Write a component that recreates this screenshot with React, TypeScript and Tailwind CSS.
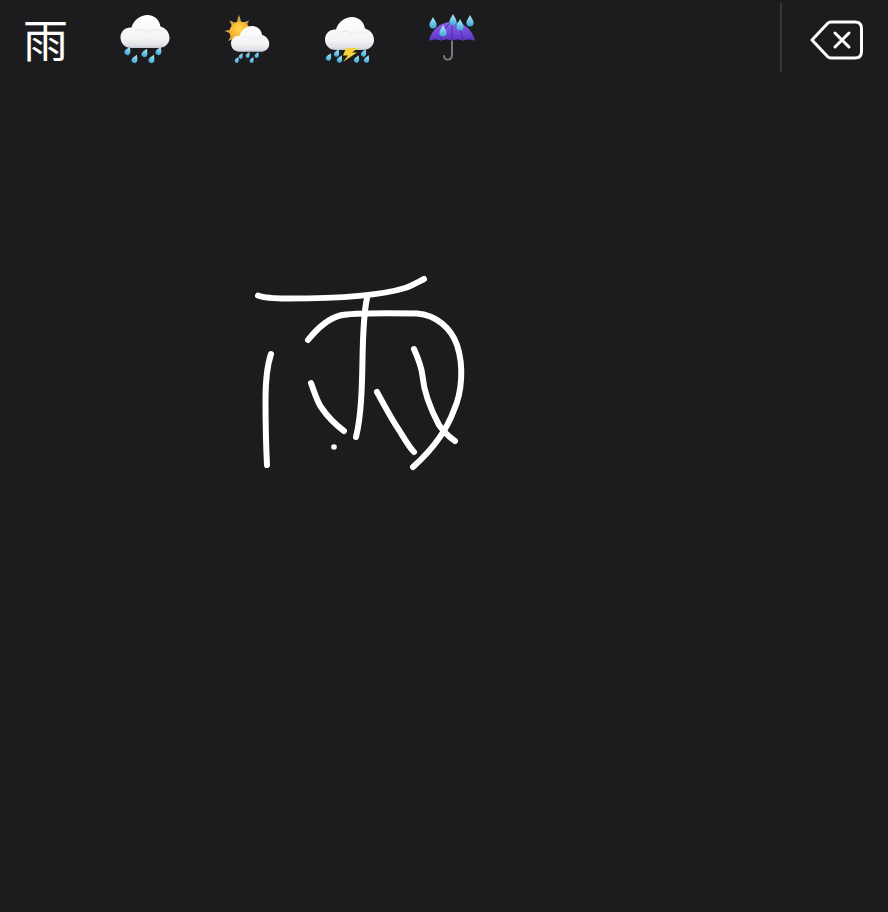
import React from 'react';

const strokes = [
  'M258 295.5 C263 297.500 272 298.500 288 298.500 C325 298.500 378 296.500 405 288 C412 285.500 418 282 424 279',
  'M367 298 C364 312 363 330 362.500 360 C362 385 361.500 415 356 437',
  'M308 340 C316 330 327 319 340 315.500 C350 313 385 313 417 313.500 C436 315 451 328 457 345 C464 366 462 392 454 410 C446 432 432 450 413 467',
  'M271 354 C267 366 265.500 380 265.500 400 C265.500 425 266 445 267 465',
  'M311 383 C314 391 317 401 321 407 C327 416 336 425 344 431',
  'M377 392 C384 405 392 420 399 430 C404 438 409 447 414 452',
  'M414 349 C418 358 421.500 366 422.500 376 C424 392 431 410 439 425 C444 432 449 437 455 441',
];

const Defs = () => (
  <defs>
    <linearGradient id="cloudFill" x1="0" y1="0" x2="0" y2="1">
      <stop offset="0" stopColor="#ffffff" />
      <stop offset="0.7" stopColor="#f4f4f6" />
      <stop offset="0.92" stopColor="#dfe0e6" />
      <stop offset="1" stopColor="#c4c6d0" />
    </linearGradient>
    <linearGradient id="dropFill" x1="0" y1="0" x2="0" y2="1">
      <stop offset="0" stopColor="#b4eefa" />
      <stop offset="1" stopColor="#3aa6d8" />
    </linearGradient>
    <radialGradient id="sunFill" cx="0.45" cy="0.35" r="0.7">
      <stop offset="0" stopColor="#ffd84a" />
      <stop offset="1" stopColor="#ee9a1c" />
    </radialGradient>
    <linearGradient id="domeFill" x1="0" y1="0" x2="0" y2="1">
      <stop offset="0" stopColor="#8f62ee" />
      <stop offset="1" stopColor="#5a34c4" />
    </linearGradient>
  </defs>
);

const Cloud = ({ x, y, s = 1 }: { x: number; y: number; s?: number }) => (
  <g transform={`translate(${x} ${y}) scale(${s})`}>
    <path
      fill="url(#cloudFill)"
      d="M11 33 C4 33 0 28 0 22.500 C0 16 5 12 11 12.500 C13 5 20 0 27 0 C34 0 39 5 40 11.500 C45 13 49 17 49 23 C49 29 44 33 38 33 Z"
    />
    <path d="M14 16 C19 13 24 14 27 18 C31 14 37 14 41 17" fill="none" stroke="#e2e3e8" strokeWidth="0.8" />
  </g>
);

const Drop = ({ x, y, r = 20, s = 1 }: { x: number; y: number; r?: number; s?: number }) => (
  <path
    transform={`translate(${x} ${y}) rotate(${r}) scale(${s})`}
    fill="url(#dropFill)"
    d="M0 -5 C1 -2.500 3 -1 3 1.500 A3 3 0 0 1 -3 1.500 C-3 -1 -1 -2.500 0 -5 Z"
  />
);

const RainCloud = () => (
  <svg width="60" height="60" viewBox="115 10 60 60">
    <Defs />
    <Cloud x={120.5} y={15} />
    {[[128, 51], [145, 53], [159, 51], [135, 59], [152, 59]].map(([x, y]) => (
      <Drop key={x} x={x} y={y} s={0.95} r={25} />
    ))}
  </svg>
);

const SunRain = () => (
  <svg width="60" height="60" viewBox="217 10 60 60">
    <Defs />
    <path
      fill="#c9a24a"
      d="M239 14.500 L241.500 23 L236.500 23 Z M229.500 20.500 L236 23 L232 26.500 Z M249 20.500 L246 26.500 L242 23 Z M224.500 31 L230.500 29.500 L230.500 33.500 Z M228 41 L231 36 L233.500 39 Z"
    />
    <circle cx="240" cy="32" r="10.500" fill="url(#sunFill)" />
    <Cloud x={231} y={26} s={0.78} />
    {[[241, 56], [248, 55], [257, 55], [237, 60], [252, 60]].map(([x, y]) => (
      <Drop key={x} x={x} y={y} s={0.65} r={25} />
    ))}
  </svg>
);

const Thunder = () => (
  <svg width="60" height="60" viewBox="319 10 60 60">
    <Defs />
    <Cloud x={325} y={17} />
    <path fill="#f5d33c" d="M346 48 L358 48 L352 52.500 L357 52.500 L343 62 L348 55.500 L343 55.500 Z" />
    {[[329, 57], [337, 53], [340, 59], [357, 59], [364, 53], [367, 59]].map(([x, y]) => (
      <Drop key={x} x={x} y={y} s={0.85} r={25} />
    ))}
  </svg>
);

const Umbrella = () => (
  <svg width="60" height="60" viewBox="421 10 60 60">
    <Defs />
    <path d="M452 40 L452 55 C452 61 444 61 444 56" fill="none" stroke="#77777c" strokeWidth="2" strokeLinecap="round" />
    <path
      fill="url(#domeFill)"
      d="M429 41 C431 30 440 22 452 22 C464 22 473 30 475 41 C471 39 466 39 463 41 C460 39 455 39 452 41 C449 39 444 39 441 41 C438 39 433 39 429 41 Z"
    />
    <path d="M441 41 C442 32 446 25 452 22 C458 25 462 32 463 41 M452 22 L452 41" fill="none" stroke="#3c2092" strokeWidth="0.7" />
    {[[433, 23], [453, 20], [470, 21], [460, 25], [443, 31]].map(([x, y]) => (
      <Drop key={x} x={x} y={y} r={0} s={1.2} />
    ))}
  </svg>
);

const candidates = [RainCloud, SunRain, Thunder, Umbrella];

export default function App() {
  return (
    <div className="flex h-[912px] w-[888px] flex-col overflow-hidden bg-[#1c1c1e] text-white">
      <div className="flex h-[80px] items-center">
        <div className="mt-[-3px] w-[94px] pl-[23px] font-['Noto_Sans_CJK_SC','Noto_Sans_CJK_JP',sans-serif] text-[45px] leading-none font-normal">
          雨
        </div>
        {candidates.map((Icon, i) => (
          <div key={i} className="flex w-[102px] justify-center">
            <Icon />
          </div>
        ))}
        <div className="mt-[-5px] ml-auto h-[69px] w-[2px] bg-[#37373a]" />
        <button aria-label="Delete" className="mr-[25px] ml-[28px] flex">
          <svg width="53" height="40" viewBox="0 0 53 40" fill="none" stroke="white" strokeWidth="3" strokeLinecap="round" strokeLinejoin="round">
            <path d="M2 20 L17.500 3.500 Q19 2 21 2 L45 2 Q51.500 2 51.500 8.500 L51.500 31.500 Q51.500 38 45 38 L21 38 Q19 38 17.500 36.500 Z" />
            <path d="M25 13 L39 27 M39 13 L25 27" />
          </svg>
        </button>
      </div>
      <svg width="888" height="832" viewBox="0 80 888 832" fill="none" className="block">
        {strokes.map((d) => (
          <path key={d} d={d} stroke="white" strokeWidth="6" strokeLinecap="round" strokeLinejoin="round" />
        ))}
        <circle cx="334" cy="447" r="2.800" fill="white" />
      </svg>
    </div>
  );
}
